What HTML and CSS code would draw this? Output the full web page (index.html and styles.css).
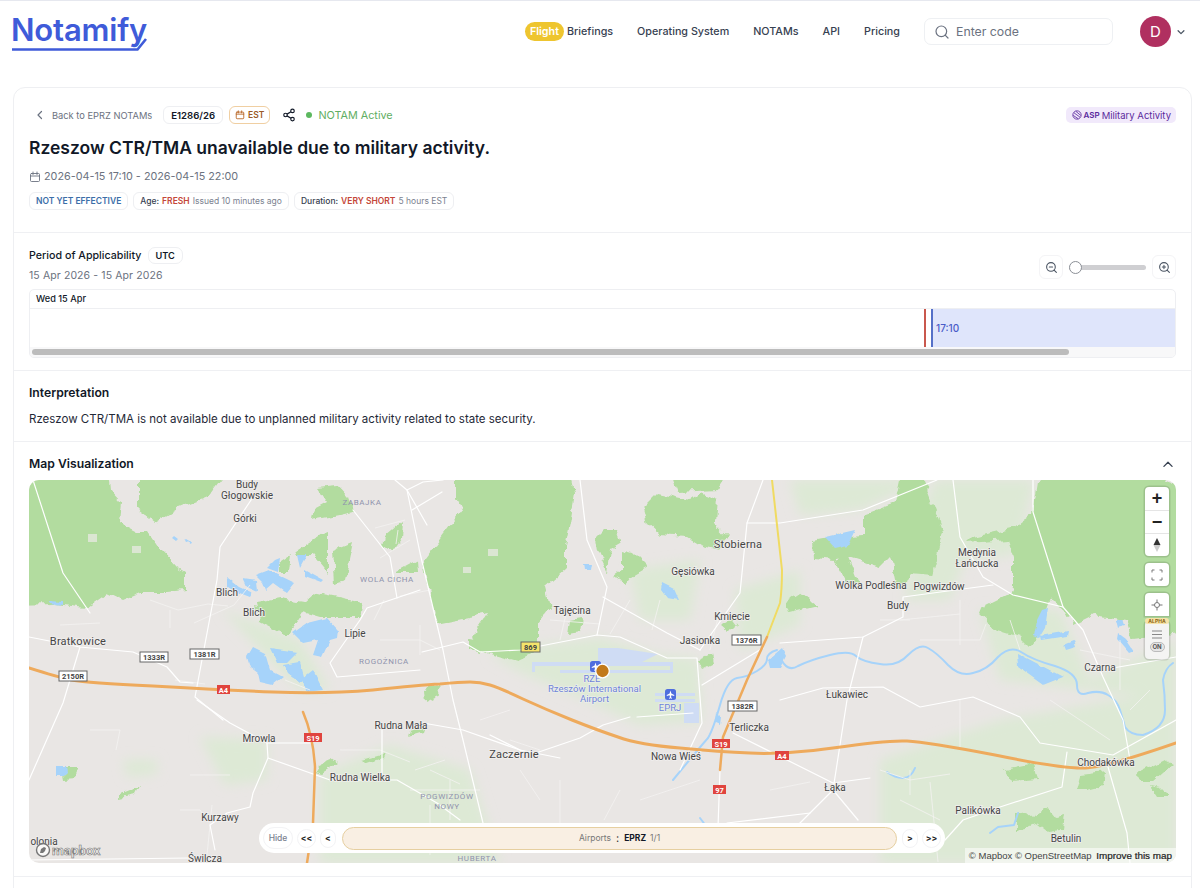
FILE: index.html
```html
<!DOCTYPE html>
<html lang="en">
<head>
  <meta charset="UTF-8" />
  <meta name="viewport" content="width=device-width, initial-scale=1.0"/>
  <title>Notamify - E1286/26</title>
  <link rel="stylesheet" href="styles.css">
</head>
<body>

<header class="topbar">
  <a class="logo" href="#">Notamify
    <svg class="logo-line" width="140" height="14" viewBox="0 0 140 14"><path d="M0 11.5H125.500L134 1" fill="none" stroke="#3f5bd9" stroke-width="2.600"/></svg>
  </a>
  <nav class="nav">
    <a class="nav-flight" href="#"><span class="flight-pill">Flight</span>Briefings</a>
    <a href="#">Operating System</a>
    <a href="#">NOTAMs</a>
    <a href="#">API</a>
    <a href="#">Pricing</a>
  </nav>
  <div class="search">
    <svg width="16" height="16" viewBox="0 0 24 24" fill="none" stroke="#6b7280" stroke-width="1.800" stroke-linecap="round"><circle cx="11" cy="11" r="8"/><path d="M21 21l-4.300-4.300"/></svg>
    <span>Enter code</span>
  </div>
  <div class="avatar">D</div>
  <svg class="avatar-chevron" width="10" height="10" viewBox="0 0 24 24" fill="none" stroke="#4b5563" stroke-width="3" stroke-linecap="round" stroke-linejoin="round"><path d="M5 9l7 7 7-7"/></svg>
</header>

<main class="card">

  <section class="section head">
    <div class="crumbs">
      <a class="back" href="#">
        <svg width="12" height="12" viewBox="0 0 24 24" fill="none" stroke="#6b7280" stroke-width="2.400" stroke-linecap="round" stroke-linejoin="round"><path d="M15 5l-7 7 7 7"/></svg>
        Back to EPRZ NOTAMs
      </a>
      <span class="chip chip-code">E1286/26</span>
      <span class="chip chip-est">
        <svg width="10" height="10" viewBox="0 0 24 24" fill="none" stroke="#b45f1c" stroke-width="2" stroke-linecap="round"><rect x="3" y="5" width="18" height="16" rx="2"/><path d="M3 10h18M8 2v5M16 2v5"/></svg>
        EST
      </span>
      <svg class="share" width="14" height="14" viewBox="0 0 24 24" fill="none" stroke="#111827" stroke-width="2"><circle cx="18" cy="5" r="3"/><circle cx="6" cy="12" r="3"/><circle cx="18" cy="19" r="3"/><path d="M8.600 10.500l6.800-4M8.600 13.500l6.800 4"/></svg>
      <span class="status"><i class="status-dot"></i>NOTAM Active</span>
      <span class="asp">
        <svg width="10" height="10" viewBox="0 0 24 24" fill="none" stroke="#5b2a9d" stroke-width="2"><circle cx="12" cy="12" r="10"/><path d="M5 7l14 10M3 13l12 8M9 3l12 10"/></svg>
        <b>ASP</b> Military Activity
      </span>
    </div>
    <h1>Rzeszow CTR/TMA unavailable due to military activity.</h1>
    <div class="dates">
      <svg width="12" height="12" viewBox="0 0 24 24" fill="none" stroke="#6b7280" stroke-width="1.800" stroke-linecap="round"><rect x="3" y="5" width="18" height="16" rx="2"/><path d="M3 10h18M8 2v5M16 2v5"/></svg>
      2026-04-15 17:10 - 2026-04-15 22:00
    </div>
    <div class="tags">
      <span class="tag tag-blue">NOT YET EFFECTIVE</span>
      <span class="tag">Age: <em>FRESH</em> <small>Issued 10 minutes ago</small></span>
      <span class="tag">Duration: <em>VERY SHORT</em> <small>5 hours EST</small></span>
    </div>
  </section>

  <section class="section period">
    <div class="period-top">
      <div>
        <div class="period-title">Period of Applicability <span class="chip chip-utc">UTC</span></div>
        <div class="period-dates">15 Apr 2026 - 15 Apr 2026</div>
      </div>
      <div class="zoomer">
        <span class="zoom-btn">
          <svg width="13" height="13" viewBox="0 0 24 24" fill="none" stroke="#4b5563" stroke-width="2" stroke-linecap="round"><circle cx="11" cy="11" r="8"/><path d="M21 21l-4.300-4.300M8 11h6"/></svg>
        </span>
        <span class="slider"><i class="slider-thumb"></i></span>
        <span class="zoom-btn">
          <svg width="13" height="13" viewBox="0 0 24 24" fill="none" stroke="#4b5563" stroke-width="2" stroke-linecap="round"><circle cx="11" cy="11" r="8"/><path d="M21 21l-4.300-4.300M8 11h6M11 8v6"/></svg>
        </span>
      </div>
    </div>
    <div class="timeline">
      <div class="tl-head">Wed 15 Apr</div>
      <div class="tl-body">
        <div class="tl-empty"></div>
        <div class="tl-now"></div>
        <div class="tl-span">17:10</div>
      </div>
      <div class="tl-scroll"><div class="tl-thumb"></div></div>
    </div>
  </section>

  <section class="section interp">
    <h2>Interpretation</h2>
    <p>Rzeszow CTR/TMA is not available due to unplanned military activity related to state security.</p>
  </section>

  <section class="section mapsec">
    <div class="map-head">
      <h2>Map Visualization</h2>
      <svg width="14" height="14" viewBox="0 0 24 24" fill="none" stroke="#374151" stroke-width="2.200" stroke-linecap="round" stroke-linejoin="round"><path d="M5 16l7-7 7 7"/></svg>
    </div>
    <div class="map">
      <svg class="map-svg" width="1147" height="383" viewBox="29 480 1147 383">
        <defs>
          <filter id="soft" filterUnits="userSpaceOnUse" x="0" y="450" width="1200" height="440">
            <feGaussianBlur stdDeviation="6"/>
          </filter>
          <filter id="rough" filterUnits="userSpaceOnUse" x="0" y="450" width="1200" height="440">
            <feTurbulence type="fractalNoise" baseFrequency="0.08" numOctaves="3" seed="4"/>
            <feDisplacementMap in="SourceGraphic" scale="9" xChannelSelector="R" yChannelSelector="G"/>
          </filter>
          <filter id="wobble" filterUnits="userSpaceOnUse" x="0" y="450" width="1200" height="440">
            <feTurbulence type="fractalNoise" baseFrequency="0.1" numOctaves="2" seed="9"/>
            <feDisplacementMap in="SourceGraphic" scale="4" xChannelSelector="R" yChannelSelector="G"/>
          </filter>
        </defs>
        <rect x="29" y="480" width="1147" height="383" fill="#e9e6e4"/>

        <!-- pale green -->
        <g fill="#dde9d5" filter="url(#soft)">
          <path d="M490 655L530 646 600 638 660 655 698 658 702 722 640 725 590 702 520 672Z"/>
          <path d="M880 760L1000 720 1176 690V863H880Z"/>
          <path d="M320 775L390 745 470 770 500 863H320Z"/>
          <path d="M200 737L267 740 267 780 225 785Z"/>
          <path d="M123 760h34v14l-30 3z"/>
          <path d="M935 480H1035L1015 555 965 560 950 600 905 600 920 520Z"/>
          <path d="M790 480H925L860 510 800 515Z"/>
          <path d="M980 610L1060 610 1090 680 1176 640V700L1000 680Z"/>
          <path d="M222 610L300 640 330 690 300 690 260 650Z"/>
          <path d="M735 590L800 570 800 625 740 650Z"/>
          <path d="M630 570L700 560 690 620 640 620Z"/>
        </g>

        <!-- forest -->
        <g fill="#b2dc9f" filter="url(#rough)">
          <path d="M15 470L108 470 110 490 122 503 120 523 137 532 148 532 160 550 177 568 185 573 185 590 167 592 142 592 123 600 108 593 88 607 53 603 15 604Z"/>
          <path d="M138 470L227 470 207 497 180 508 155 523 138 510Z"/>
          <path d="M317 487L337 485 348 497 353 512 340 515 313 520 315 510 328 503Z"/>
          <path d="M295 552L320 535 328 532 328 573 313 555 297 557Z"/>
          <path d="M333 550L353 542 345 580 335 583Z"/>
          <path d="M385 535L403 520 402 540 393 553 383 545Z"/>
          <path d="M393 573L417 560 418 573Z"/>
          <path d="M257 602L280 598 303 602 313 593 363 603 360 617 320 617 303 612 287 636 260 622Z"/>
          <path d="M278 563L290 555 288 572 278 572Z"/>
          <path d="M457 470L570 470 575 493 570 523 565 547 565 570 545 587 550 607 538 623 538 650 517 660 480 650 472 637 488 613 437 623 423 563 453 523 463 510 457 497Z"/>
          <path d="M643 507L657 493 690 500 700 493 717 500 715 523 728 537 720 550 700 545 687 537 660 535 647 523Z"/>
          <path d="M670 470L730 470 717 490 677 492Z"/>
          <path d="M595 538L603 530 617 530 622 543 610 550 607 572 597 550Z"/>
          <path d="M622 550L633 553 648 568 633 577 627 585 613 577 622 570Z"/>
          <path d="M570 620L582 618 580 633 568 635Z"/>
          <path d="M785 603L800 593 817 605 788 612Z"/>
          <path d="M812 540L823 538 863 535 863 515 895 503 902 470 920 470 943 533 937 560 933 575 910 573 905 590 897 590 890 557 880 567 848 557 860 587 847 582 835 560 813 558Z"/>
          <path d="M1040 470L1143 470 1190 490 1190 633 1133 640 1127 620 1093 615 1073 625 1063 607 1050 600 1037 637 1030 647 1020 637 997 630 978 613 980 608 1010 593 1013 587 1013 557 1007 540 967 543 973 537 1013 528 1033 513Z"/>
          <path d="M424 690l14-5 3 10-16 8zM712 655l-14 6 4 8 12-6z"/>
          <path d="M410 730l14-4-2 6-14 4zM318 765l14-6 6 4-16 10-8-2zM362 760l22-6-2 5-18 6z"/>
          <path d="M62 768h18l-4 10-12 1zM120 795l20-8-4 8-16 3z"/>
          <path d="M1004 770l30-6 4 16-26 2z"/>
          <path d="M1015 815l12-2 6 5 15-10 8 10 8-2-2 14-14 2-10-8-14 6-9 2z"/>
          <path d="M1077 790l4-15 24-3-2 14-16 4z"/>
          <path d="M1135 775l30-15 8 4-20 18-14 0zM1150 785l10 2 10 10-12 0z"/>
          <path d="M720 625l12-7 6 8-10 6z"/>
          <path d="M470 640l12 2-2 10-10-3z"/>
        </g>
        <g fill="#dbe6d2">
          <rect x="488" y="549" width="10" height="7"/>
          <rect x="463" y="567" width="8" height="6"/>
          <rect x="88" y="534" width="9" height="8"/>
          <rect x="132" y="546" width="9" height="7"/>
        </g>

        <!-- water -->
        <g fill="#a6d3fa" filter="url(#wobble)">
          <path d="M228 578L240 587 253 593 250 598 237 593 228 587Z"/>
          <path d="M243 578L257 580 258 592 247 587Z"/>
          <path d="M255 575L268 570 295 583 287 593 273 583 265 590 262 582Z"/>
          <path d="M297 555L307 555 300 568Z"/>
          <path d="M275 560L280 558 278 572 267 568Z"/>
          <path d="M305 570l18 10-2 2-16-6z"/>
          <path d="M293 633L307 623 327 618 338 630 337 638 330 640 322 657 313 655 318 640 303 643Z"/>
          <path d="M247 657L253 647 265 653 270 670 283 677 273 685 260 682 258 673 250 667Z"/>
          <path d="M270 648L298 652 287 663 277 663Z"/>
          <path d="M283 665L300 662 305 680 300 683 287 673Z"/>
          <path d="M303 678L313 670 323 690 305 692Z"/>
          <path d="M48 601l14 1 0 4-12-2zM174 536l4 3-2 2-4-3zM186 539l5 3-1 2-5-3z"/>
          <path d="M825 537L855 530 848 545 835 548Z"/>
          <path d="M1017 653L1063 677 1043 685 1018 667Z"/>
          <path d="M662 583l12 6 5 11-12-2-6-8z"/>
          <path d="M583 564h9l-1 6h-7z"/>
          <path d="M1042 610l6-2-3 20-6 10-5-2 3-16z"/>
          <path d="M1040 636l28-5-1 5-26 4z"/>
          <path d="M1064 645l10-4 2 6-10 3z"/>
          <path d="M1115 620l8 0 2 6-8 2z"/>
          <path d="M1118 633l8 6 8 12-5 2-12-14z"/>
          <path d="M56 766h11l1 6-4 4h-8z"/>
          <path d="M768 660l14-12 4 8-6 12-10 0z"/>
          <path d="M716 712l5 5-1 8-5-2z"/>
        </g>
        <g fill="none" stroke="#a6d3fa" stroke-width="2" stroke-linejoin="round" stroke-linecap="round">
          <path d="M780 657Q787 673 798 666Q810 660 830 655Q850 650 856 656Q863 662 880 664Q897 667 908 655Q920 643 928 648Q937 653 948 665Q960 677 973 673Q987 670 998 657Q1010 645 1021 652Q1033 660 1055 666Q1077 673 1077 685Q1077 697 1088 693Q1100 690 1108 695Q1117 700 1120 710Q1123 720 1125 727Q1130 735 1143 735Q1165 728 1165 710Q1165 695 1163 680Q1165 668 1173 663"/>
          <path d="M673 780Q700 747 708 738Q713 730 720 705Q727 680 737 678Q747 677 757 671Q767 665 767 659Q767 653 777 650"/>
          <path d="M887 772q8 6 16 6t12-10M990 833l8-6 16-2 4-12"/>
          <path d="M700 818l6 8M600 850l24-22"/>
        </g>

        <!-- airport -->
        <g fill="#cfdcf4">
          <rect x="532" y="662" width="141" height="4"/>
          <rect x="560" y="670" width="113" height="3"/>
          <rect x="532" y="662" width="3" height="10"/>
          <rect x="670" y="662" width="3" height="10"/>
          <rect x="598" y="648" width="20" height="14"/>
          <rect x="655" y="693" width="40" height="3"/>
          <rect x="655" y="699" width="40" height="3"/>
          <rect x="684" y="703" width="15" height="20"/>
          <path d="M618 648l40 6-20 10-20-2z"/>
        </g>

        <!-- small streets -->
        <g fill="none" stroke="#f4f2f1" stroke-width=".8" stroke-linejoin="round">
          <path d="M150 600l28 10 30-6 20 2M170 610v18M250 585l-16 20-40 18M60 625l40-2M90 730h30l-4 20M190 775h40M212 805l-5 50M180 810h20l8 12"/>
          <path d="M405 520l-30 8M398 530l-2 14M410 540l-30 18M430 590l-30 6M384 600l-10 20M380 640h40l20 10M420 625v30M445 760l-30 10M410 790h70M430 805v50M450 780v40"/>
          <path d="M550 620l50 4M560 640l6-26M630 600l-20 34M660 600l-8 30M720 610l-10 40M900 620l60-6M960 600v45M920 640h60l6-16M880 620h30M1010 620l10 30M1080 650l50 10M1120 640v50M1150 690l-20 20"/>
          <path d="M880 770l30 10 40-6M910 770v25M930 782l8 80M960 700v50M1050 700l60 40M640 800l60-20M560 780v60M620 790l-16 30M770 790l40-8M900 800l40 20"/>
          <path d="M175 680l30 4M285 680l25 10M340 750h40l30 12M430 770l30 14M480 720l30-10M510 740l30 10M520 770l20 30"/>
        </g>

        <!-- roads -->
        <g fill="none" stroke="#fff" stroke-width="1.200" stroke-linejoin="round" stroke-linecap="round">
          <path d="M407 490L420 553 443 650 453 700 463 740 483 823"/>
          <path d="M395 480l12 10 16-8 20-2M407 490l20 35M412 510l30-18"/>
          <path d="M422 652L463 642 480 652 520 650 597 635 620 637 667 658 697 658 702 723 680 770"/>
          <path d="M580 480L587 540 607 587 597 635"/>
          <path d="M603 597L667 633 700 650"/>
          <path d="M763 480L747 523 740 593 700 650"/>
          <path d="M747 523H780L863 510 937 480"/>
          <path d="M953 480L960 537 983 577 1013 595 1063 607 1083 630 1103 677 1123 720 1130 760"/>
          <path d="M1033 480V512L1063 607"/>
          <path d="M903 597L993 585M903 597V617L863 637 780 643"/>
          <path d="M863 637L847 700 833 790 810 813 727 823"/>
          <path d="M1113 668L1176 657"/>
          <path d="M780 700L823 688 883 687 920 707 973 697 1020 717 1040 743 1113 755 1176 720"/>
          <path d="M1108 767L1127 833 1130 863"/>
          <path d="M1067 752L1062 787 1000 807 963 820 945 840"/>
          <path d="M33 480L63 573 90 613"/>
          <path d="M29 637L80 647 133 652 167 667 180 682 193 683"/>
          <path d="M253 497L220 547 217 580 195 697 223 720"/>
          <path d="M80 647L63 703 29 780"/>
          <path d="M420 590L367 608 360 620 330 663 337 677 420 670"/>
          <path d="M353 510L390 557 397 598"/>
          <path d="M197 700L230 723 267 743 268 758 253 793 250 807 227 813 210 825 215 850"/>
          <path d="M268 758L330 780 397 780 437 803 460 820"/>
          <path d="M382 727V780M423 723L463 730 520 750 560 758"/>
          <path d="M267 743H313"/>
          <path d="M630 717L603 725 580 738 530 755 490 735"/>
          <path d="M637 717L693 713M702 685L763 648"/>
          <path d="M733 733L833 783 870 778"/>
          <path d="M720 770L718 827"/>
          <path d="M810 813l-20 20M833 790l25 30"/>
          <path d="M29 860L190 858"/>
        </g>

        <!-- motorways -->
        <g fill="none" stroke-linejoin="round" stroke-linecap="round">
          <path d="M772 480L782 570Q782 590 780 603L767 637" stroke="#f0db62" stroke-width="2"/>
          <path d="M767 637L747 680 723 737 720 770" stroke="#eeaa5c" stroke-width="2.500"/>
          <path d="M303 712Q313 735 315 767L313 823 307 863" stroke="#eeaa5c" stroke-width="2.500"/>
          <path d="M29 668Q57 677 72 680Q87 683 153 686Q220 690 273 692Q327 694 373 690Q420 685 440 684Q460 682 470 682Q480 682 490 685Q500 688 523 699Q547 710 572 720Q597 730 618 737Q640 745 680 748Q720 752 750 753Q780 755 833 748Q887 740 907 741Q927 742 995 755Q1063 769 1085 768Q1107 767 1176 743" stroke="#eeaa5c" stroke-width="3"/>
        </g>

        <!-- shields -->
        <g class="shield">
          <rect x="59" y="671" width="28" height="10"/><text x="73" y="679">2150R</text>
          <rect x="140" y="652" width="28" height="10"/><text x="154" y="660">1333R</text>
          <rect x="190" y="649" width="29" height="10"/><text x="204.500" y="657">1381R</text>
          <rect x="732" y="635" width="29" height="10"/><text x="746.500" y="643">1376R</text>
          <rect x="728" y="701" width="29" height="10"/><text x="742.500" y="709">1382R</text>
        </g>
        <g class="shield-yellow">
          <rect x="521" y="642" width="19" height="10"/><text x="530.500" y="650">869</text>
        </g>
        <g class="shield-red">
          <rect x="217" y="685" width="13" height="9"/><text x="223.500" y="692.500">A4</text>
          <rect x="304" y="733" width="18" height="9"/><text x="313" y="740.500">S19</text>
          <rect x="712" y="739" width="18" height="9"/><text x="721" y="746.500">S19</text>
          <rect x="775" y="751" width="14" height="9"/><text x="782" y="758.500">A4</text>
          <rect x="713" y="785" width="13" height="9"/><text x="719.500" y="792.500">97</text>
        </g>

        <!-- places -->
        <g class="place">
          <text x="247" y="488">Budy</text>
          <text x="247" y="498.500">Głogowskie</text>
          <text x="245" y="522">Górki</text>
          <text x="227" y="596">Blich</text>
          <text x="254" y="616">Blich</text>
          <text x="355" y="637">Lipie</text>
          <text x="572" y="614">Tajęcina</text>
          <text x="693" y="575">Gęsiówka</text>
          <text x="732" y="620">Kmiecie</text>
          <text x="700" y="644">Jasionka</text>
          <text x="749" y="731">Terliczka</text>
          <text x="676" y="760">Nowa Wieś</text>
          <text x="871" y="589">Wólka Podleśna</text>
          <text x="939" y="590">Pogwizdów</text>
          <text x="898" y="609">Budy</text>
          <text x="977" y="556">Medynia</text>
          <text x="977" y="567">Łańcucka</text>
          <text x="847" y="698">Łukawiec</text>
          <text x="259" y="742">Mrowla</text>
          <text x="401" y="729">Rudna Mała</text>
          <text x="360" y="781">Rudna Wielka</text>
          <text x="220" y="821">Kurzawy</text>
          <text x="205" y="862">Świlcza</text>
          <text x="835" y="791">Łąka</text>
          <text x="978" y="814">Palikówka</text>
          <text x="1066" y="842">Betulin</text>
          <text x="1106" y="766">Chodakówka</text>
          <text x="44" y="845">olonia</text>
          <text x="1100" y="671">Czarna</text>
        </g>
        <g class="place place-big">
          <text x="78" y="645">Bratkowice</text>
          <text x="514" y="758">Zaczernie</text>
          <text x="738" y="548">Stobierna</text>
        </g>
        <g class="hood">
          <text x="362" y="505">ZABAJKA</text>
          <text x="387" y="582">WOLA CICHA</text>
          <text x="384" y="664">ROGOŻNICA</text>
          <text x="447" y="799">POGWIZDÓW</text>
          <text x="447" y="809">NOWY</text>
          <text x="477" y="861">HUBERTA</text>
        </g>
        <g class="poi">
          <text x="592" y="682">RZE</text>
          <text x="594.500" y="692">Rzeszów International</text>
          <text x="594.500" y="702">Airport</text>
          <text x="670" y="711">EPRJ</text>
        </g>

        <!-- airport marks -->
        <rect x="590" y="661" width="11" height="11" rx="2.500" fill="#4f6ede"/>
        <path d="M595.500 662.500l.9 3 2.800 1.400v1l-2.800-.6-.4 2 1 .8v.6l-1.500-.4-1.500.4v-.6l1-.8-.4-2-2.800.6v-1l2.800-1.400z" fill="#fff"/>
        <rect x="665" y="689" width="11" height="11" rx="2.500" fill="#4f6ede"/>
        <path d="M670.500 690.500l.9 3 2.800 1.400v1l-2.800-.6-.4 2 1 .8v.6l-1.500-.4-1.500.4v-.6l1-.8-.4-2-2.800.6v-1l2.800-1.400z" fill="#fff"/>
        <circle cx="602.500" cy="671" r="6.800" fill="#c27a1a" stroke="#fff" stroke-width="1.300"/>
      </svg>

      <div class="mb-logo">
        <svg width="16" height="16" viewBox="0 0 16 16"><circle cx="8" cy="8" r="6.500" fill="#fff" fill-opacity=".7" stroke="#777" stroke-width="1.400"/><path d="M5 11l1-4 3-2 2 1-1 3-2 2z" fill="#777"/></svg>
        <span>mapbox</span>
      </div>
      <div class="attrib">© Mapbox © OpenStreetMap <b>Improve this map</b></div>

      <div class="ctrls">
        <div class="ctrl-group">
          <button class="ctrl-btn ctrl-big">+</button>
          <button class="ctrl-btn ctrl-big">−</button>
          <button class="ctrl-btn">
            <svg width="10" height="16" viewBox="0 0 10 16"><path d="M5 1l3.500 7h-7z" fill="#333"/><path d="M5 15l3.500-7h-7z" fill="#ccc"/></svg>
          </button>
        </div>
        <div class="ctrl-group">
          <button class="ctrl-btn">
            <svg width="12" height="12" viewBox="0 0 12 12" fill="none" stroke="#777" stroke-width="1"><path d="M1 3.500V1h2.500M8.500 1H11v2.500M11 8.500V11H8.500M3.500 11H1V8.500"/></svg>
          </button>
        </div>
        <div class="ctrl-group ctrl-last">
          <button class="ctrl-btn">
            <svg width="12" height="12" viewBox="0 0 12 12" fill="none" stroke="#777" stroke-width="1"><circle cx="6" cy="6" r="2.500"/><path d="M6 .5v3M6 8.500v3M.5 6h3M8.500 6h3"/></svg>
          </button>
        </div>
        <div class="ctrl-group ctrl-layers">
          <span class="alpha">ALPHA</span>
          <svg width="12" height="9" viewBox="0 0 12 9" fill="none" stroke="#888" stroke-width="1"><path d="M1 1h10M1 4.500h10M1 8h10"/></svg>
          <span class="on">ON</span>
        </div>
      </div>

      <div class="pager">
        <span class="pg-btn pg-hide">Hide</span>
        <span class="pg-btn">&lt;&lt;</span>
        <span class="pg-btn pg-one">&lt;</span>
        <div class="pg-track"><span class="pg-label">Airports</span><span class="pg-sep">:</span><b>EPRZ</b><span class="pg-count">1/1</span></div>
        <span class="pg-btn pg-one">&gt;</span>
        <span class="pg-btn">&gt;&gt;</span>
      </div>
    </div>
  </section>

  <section class="section rest"></section>
</main>

</body>
</html>
```

FILE: styles.css
```css
* { margin: 0; padding: 0; box-sizing: border-box; }
html, body { height: 888px; overflow: hidden; }
body {
  font-family: Inter, "Liberation Sans", sans-serif;
  background: #fff;
  color: #111827;
  border-top: 1px solid #e6e8ef;
}
a { color: inherit; text-decoration: none; }

/* Barre du haut */
.topbar {
  height: 61px;
  display: flex;
  align-items: center;
  padding: 0 11px 0 12px;
}
.logo {
  position: relative;
  font-size: 31px;
  line-height: 38px;
  font-weight: 600;
  color: #3f5bd9;
  letter-spacing: -0.2px;
  margin: -4px 0 0 -1px;
}
.logo-line { position: absolute; left: 1px; top: 27px; }
.nav {
  margin-left: auto;
  display: flex;
  align-items: center;
  gap: 24px;
  font-size: 10.750px;
  font-weight: 500;
  color: #374151;
}
.nav-flight { display: flex; align-items: center; gap: 3px; }
.flight-pill {
  display: block;
  background: #eec52f;
  color: #fff;
  font-weight: 600;
  line-height: 19px;
  padding: 0 5px;
  border-radius: 10px;
}
.search {
  width: 189px;
  height: 27px;
  margin-left: 24px;
  padding-left: 9px;
  display: flex;
  align-items: center;
  gap: 6px;
  border: 1px solid #eef0f3;
  border-radius: 7px;
  font-size: 12.300px;
  color: #6b7280;
}
.avatar {
  width: 31px;
  height: 31px;
  margin-left: 27px;
  border-radius: 50%;
  background: #b03060;
  color: #fff;
  font-size: 15px;
  display: flex;
  align-items: center;
  justify-content: center;
}
.avatar-chevron { margin-left: 5px; margin-right: 3px; }

/* Carte principale */
.card {
  margin: 25px 8px 0 13px;
  border: 1px solid #eeeff2;
  border-radius: 12px;
}
.section { padding: 0 15px; border-bottom: 1px solid #eff0f3; }

.head { height: 145px; padding-top: 17px; }
.crumbs { display: flex; align-items: center; height: 20px; }
.back {
  display: flex;
  align-items: center;
  gap: 6px;
  margin-left: 5px;
  font-size: 9.300px;
  color: #6b7280;
}
.chip {
  display: inline-flex;
  align-items: center;
  border: 1px solid #eeeff2;
  border-radius: 6px;
  font-weight: 600;
}
.chip-code { margin-left: 11px; height: 18px; padding: 0 7px; font-size: 9.600px; }
.chip-est {
  margin-left: 6px;
  height: 18px;
  padding: 0 5px;
  gap: 3px;
  font-size: 8.500px;
  color: #9a5a26;
  border-color: #f0cfa2;
}
.share { margin-left: 12px; }
.status {
  margin-left: 10px;
  display: flex;
  align-items: center;
  gap: 6px;
  font-size: 10.800px;
  color: #5fae63;
}
.status-dot { width: 6px; height: 6px; border-radius: 50%; background: #5cb85f; }
.asp {
  margin-left: auto;
  height: 16px;
  padding: 0 5px 0 6px;
  display: flex;
  align-items: center;
  gap: 2px;
  border-radius: 5px;
  background: #f1e9fb;
  color: #5b2a9d;
  font-size: 9.500px;
}
.asp b { font-size: 8px; font-weight: 600; }
.head h1 { font-size: 17.500px; line-height: 26px; font-weight: 600; margin-top: 10px; }
.dates {
  display: flex;
  align-items: center;
  gap: 3px;
  margin-top: 9px;
  font-size: 10.800px;
  color: #6b7280;
}
.tags { display: flex; gap: 5px; margin-top: 9px; }
.tag {
  height: 18px;
  padding: 0 6px;
  display: flex;
  align-items: center;
  gap: 3px;
  border: 1px solid #eeeff2;
  border-radius: 6px;
  font-size: 8.500px;
  font-weight: 500;
  color: #374151;
}
.tag-blue { color: #3b6ea8; font-weight: 600; }
.tag em { font-style: normal; font-weight: 600; color: #c4473a; }
.tag small { font-size: 8.500px; color: #7b8290; font-weight: 400; }

.period { height: 138px; padding-top: 13px; }
.period-top { display: flex; justify-content: space-between; }
.period-title { font-size: 10.700px; font-weight: 500; display: flex; align-items: center; gap: 6px; height: 18px; }
.chip-utc { height: 17px; padding: 0 7px; font-size: 9.200px; border-radius: 7px; }
.period-dates { font-size: 10.500px; color: #6b7280; margin-top: 5px; letter-spacing: .1px; }
.zoomer { display: flex; align-items: center; height: 24px; margin-top: 9px; }
.zoom-btn {
  width: 24px;
  height: 24px;
  display: flex;
  align-items: center;
  justify-content: center;
  border: 1px solid #f4f4f6;
  border-radius: 6px;
}
.slider {
  position: relative;
  width: 77px;
  height: 5px;
  margin: 0 6px;
  border-radius: 3px;
  background: #cfcfd2;
}
.slider-thumb {
  position: absolute;
  left: 0;
  top: -4px;
  width: 13px;
  height: 13px;
  border-radius: 50%;
  background: #fff;
  border: 1px solid #8b8f96;
}
.timeline {
  margin-top: 7px;
  height: 69px;
  border: 1px solid #eeeff2;
  border-radius: 5px;
  overflow: hidden;
}
.tl-head {
  height: 19px;
  padding-left: 6px;
  font-size: 9.200px;
  font-weight: 500;
  line-height: 18px;
  border-bottom: 1px solid #eeeff2;
}
.tl-body { display: flex; height: 38px; }
.tl-empty { width: 894px; }
.tl-now { width: 2px; background: #c9584e; margin-right: 5px; }
.tl-span {
  flex: 1;
  background: #dfe5fb;
  border-left: 2px solid #5570c8;
  padding-left: 3px;
  font-size: 10px;
  line-height: 38px;
  color: #4a5cc8;
  font-weight: 500;
}
.tl-scroll { height: 11px; background: #f8f8f9; padding: 2px; }
.tl-thumb { width: 1037px; height: 6px; border-radius: 3px; background: #bcbcbc; }

.interp { height: 71px; padding-top: 14px; }
h2 { font-size: 12.200px; font-weight: 600; line-height: 16px; }
.interp p { font-size: 11.500px; line-height: 16px; margin-top: 10px; color: #1f2937; }

.mapsec { height: 435px; padding-top: 14px; }
.map-head { display: flex; justify-content: space-between; align-items: center; height: 16px; padding-right: 1px; }
.map {
  position: relative;
  height: 383px;
  margin-top: 8px;
  border-radius: 10px;
  overflow: hidden;
}
.map-svg { display: block; }
.shield rect { fill: #fff; stroke: #666; stroke-width: 1; }
.shield-yellow rect { fill: #f5e36b; stroke: #666; stroke-width: 1; }
.shield-red rect { fill: #e0443e; }
.shield text, .shield-yellow text, .shield-red text {
  font-family: Roboto, sans-serif;
  font-size: 7.500px;
  font-weight: 700;
  text-anchor: middle;
  fill: #444;
}
.shield-red text { fill: #fff; }
.place text {
  font-family: Roboto, sans-serif;
  font-size: 10px;
  text-anchor: middle;
  fill: #454545;
  stroke: #f1efee;
  stroke-width: 1.500px;
  paint-order: stroke;
}
.place-big text { font-size: 11px; letter-spacing: .2px; }
.hood text {
  font-family: Roboto, sans-serif;
  font-size: 8px;
  letter-spacing: .6px;
  text-anchor: middle;
  fill: #8f93ad;
}
.poi text {
  font-family: Roboto, sans-serif;
  font-size: 9.500px;
  text-anchor: middle;
  fill: #6f83d6;
  stroke: #eef1ee;
  stroke-width: 1.200px;
  paint-order: stroke;
}

.mb-logo {
  position: absolute;
  left: 6px;
  bottom: 5px;
  display: flex;
  align-items: center;
  gap: 1px;
  font-family: Roboto, sans-serif;
  font-size: 13.500px;
  font-weight: 700;
  color: #f2f0ee;
  -webkit-text-stroke: .6px #777;
}
.attrib {
  position: absolute;
  right: 0;
  bottom: 0;
  height: 15px;
  padding: 0 4px;
  background: rgba(255,255,255,.55);
  font-family: "Liberation Sans", sans-serif;
  font-size: 9.500px;
  line-height: 15px;
  color: #444;
}
.attrib b { margin-left: 2px; font-size: 9.900px; font-weight: 400; color: #222; -webkit-text-stroke: .2px #222; }

.ctrls {
  position: absolute;
  top: 7px;
  right: 7px;
  width: 24px;
  display: flex;
  flex-direction: column;
  gap: 7px;
}
.ctrl-group {
  background: #fff;
  border-radius: 4px;
  box-shadow: 0 0 0 1.500px rgba(0,0,0,.12);
  display: flex;
  flex-direction: column;
}
.ctrl-btn {
  width: 24px;
  height: 23px;
  border: 0;
  border-top: 1px solid #e5e5e5;
  background: none;
  display: flex;
  align-items: center;
  justify-content: center;
  font-family: "Liberation Sans", sans-serif;
  color: #222;
}
.ctrl-btn:first-child { border-top: 0; }
.ctrl-big { font-size: 18px; font-weight: 700; }
.ctrl-last { border-radius: 4px 4px 0 0; margin-bottom: 1px; }
.ctrl-layers {
  position: relative;
  margin-top: -3px;
  height: 38px;
  padding-top: 9px;
  align-items: center;
  gap: 3px;
  background: #f4f4f3;
}
.alpha {
  position: absolute;
  top: -3px;
  left: 0;
  width: 24px;
  height: 6px;
  border-radius: 3px;
  background: #f6e3a8;
  color: #8a6414;
  font-size: 5px;
  font-weight: 700;
  line-height: 6px;
  text-align: center;
}
.on {
  width: 15px;
  height: 10px;
  border-radius: 5px;
  border: 1px solid #bbb;
  background: #e5e5e5;
  font-size: 6px;
  font-weight: 700;
  line-height: 8px;
  text-align: center;
  color: #555;
}

.pager {
  position: absolute;
  left: 230px;
  bottom: 10px;
  width: 686px;
  height: 30px;
  padding: 0 4px;
  display: flex;
  align-items: center;
  gap: 4px;
  border-radius: 15px;
  background: #fff;
}
.pg-btn {
  width: 19px;
  height: 19px;
  flex: none;
  display: flex;
  align-items: center;
  justify-content: center;
  border: 1px solid #f3f3f5;
  border-radius: 10px;
  font-size: 8.500px;
  font-weight: 700;
  color: #222;
}
.pg-one { width: 16px; }
.pg-hide { width: 30px; height: 22px; border-radius: 11px; color: #7b8290; font-weight: 500; }
.pg-track {
  flex: 1;
  height: 23px;
  margin: 0 1px 0 2px;
  display: flex;
  align-items: center;
  justify-content: center;
  gap: 4px;
  border: 1px solid #e6cfa0;
  border-radius: 12px;
  background: #f9efe3;
  font-size: 8.500px;
}
.pg-track b { font-weight: 700; }
.pg-label, .pg-sep, .pg-count { color: #777; }
.pg-sep { margin: 0 1px; color: #333; font-size: 11px; }

.rest { height: 60px; border-bottom: 0; }
```
